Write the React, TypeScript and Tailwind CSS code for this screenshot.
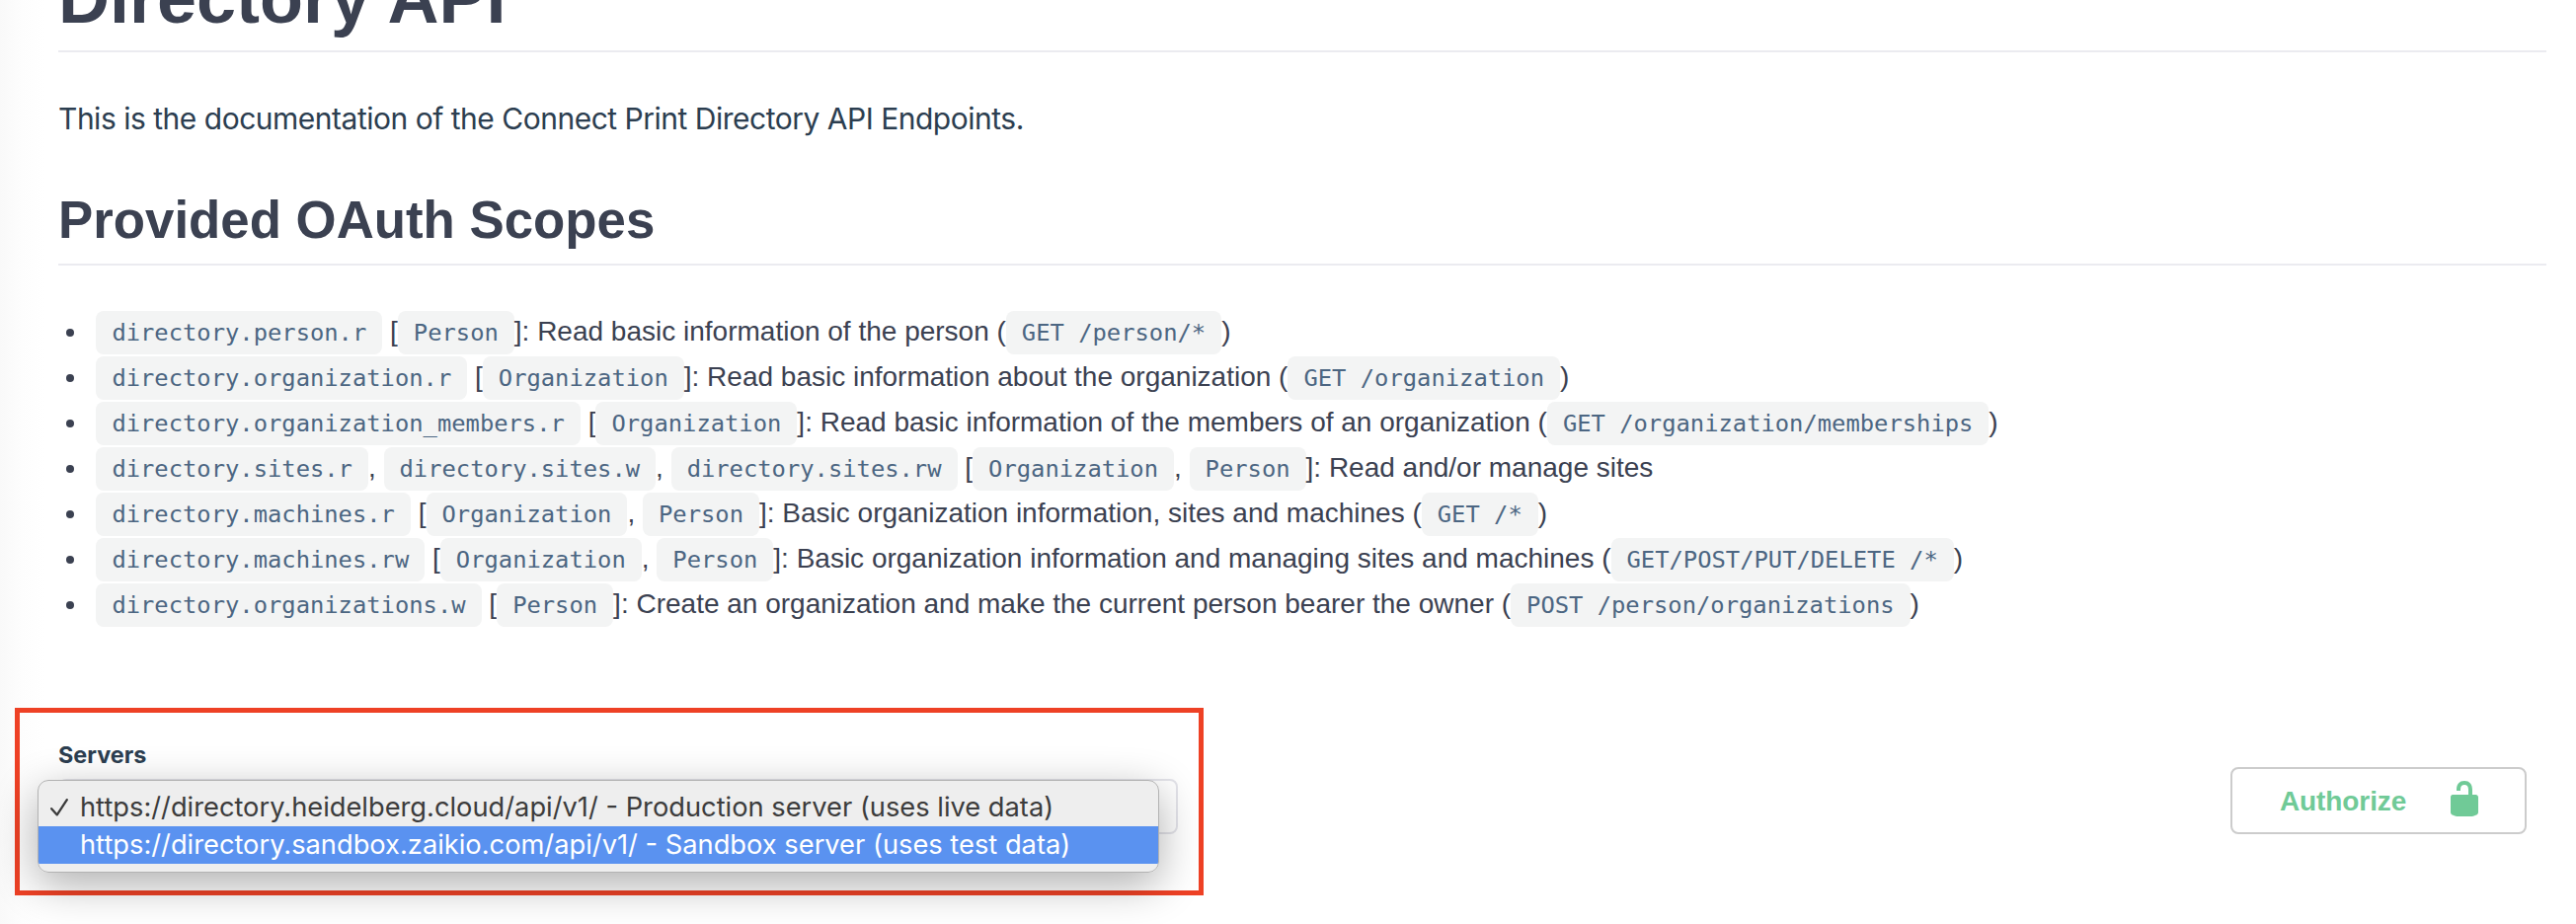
import type { ReactNode } from "react";

function Code({ children }: { children: ReactNode }) {
  return (
    <code className="rounded-[8px] bg-[#f3f4f4] px-4 py-2 font-['DejaVu_Sans_Mono',monospace] text-[23.8px] leading-none text-[#4c6682]">
      {children}
    </code>
  );
}

type Scope = { names: string[]; owners: string[]; text: string; endpoint?: string };

const scopes: Scope[] = [
  { names: ["directory.person.r"], owners: ["Person"], text: "Read basic information of the person", endpoint: "GET /person/*" },
  { names: ["directory.organization.r"], owners: ["Organization"], text: "Read basic information about the organization", endpoint: "GET /organization" },
  { names: ["directory.organization_members.r"], owners: ["Organization"], text: "Read basic information of the members of an organization", endpoint: "GET /organization/memberships" },
  { names: ["directory.sites.r", "directory.sites.w", "directory.sites.rw"], owners: ["Organization", "Person"], text: "Read and/or manage sites" },
  { names: ["directory.machines.r"], owners: ["Organization", "Person"], text: "Basic organization information, sites and machines", endpoint: "GET /*" },
  { names: ["directory.machines.rw"], owners: ["Organization", "Person"], text: "Basic organization information and managing sites and machines", endpoint: "GET/POST/PUT/DELETE /*" },
  { names: ["directory.organizations.w"], owners: ["Person"], text: "Create an organization and make the current person bearer the owner", endpoint: "POST /person/organizations" },
];

function CodeList({ items }: { items: string[] }) {
  return (
    <>
      {items.map((item, i) => (
        <span key={item}>
          {i > 0 && ", "}
          <Code>{item}</Code>
        </span>
      ))}
    </>
  );
}

function ScopeRow({ scope }: { scope: Scope }) {
  return (
    <li className="flex h-[46px] items-center">
      <span className="mt-[2px] mr-[22.4px] ml-[8px] size-[8px] rounded-full bg-[#3b4151]" />
      <span className="h-[46px] whitespace-pre">
        <CodeList items={scope.names} />
        {" ["}
        <CodeList items={scope.owners} />
        {"]: " + scope.text}
        {scope.endpoint && (
          <>
            {" ("}
            <Code>{scope.endpoint}</Code>
            {")"}
          </>
        )}
      </span>
    </li>
  );
}

function ServerMenu() {
  return (
    <div className="absolute top-[-1px] left-[-23px] flex h-[94px] w-[1136px] flex-col overflow-hidden rounded-[11px] border border-[#b2b2b2] bg-[#eeeeee] pt-2 text-[27.27px] leading-[38px] whitespace-pre text-[#3c3c3c]">
      <div className="flex h-[38px] items-start pl-[12px]">
        <svg viewBox="0 0 18 18" className="mt-[10px] mr-[12px] size-[18px]" fill="none" stroke="#3c3c3c" strokeWidth="2.3" strokeLinecap="round" strokeLinejoin="round">
          <path d="M1.2 10.2 6.8 16.4 16.8 1.2" />
        </svg>
        <span>https://directory.heidelberg.cloud/api/v1/ - Production server (uses live data)</span>
      </div>
      <div className="h-[38px] bg-[#5a92f0] pl-[42px] text-white">
        https://directory.sandbox.zaikio.com/api/v1/ - Sandbox server (uses test data)
      </div>
    </div>
  );
}

export default function App() {
  return (
    <div className="flex h-[936px] w-[2609px] flex-col overflow-hidden bg-white bg-[linear-gradient(to_right,#f9f9f9_0px,#fdfdfd_22px,#ffffff_46px)] font-['Liberation_Sans',Arial,sans-serif] text-[#3b4151]">
      <main className="mr-[30px] ml-[59px] flex flex-col">
        <h1 className="-mt-[38px] border-b-2 border-[#ebebf0] pb-[17px] text-[72px] leading-[72px] font-bold">Directory API</h1>
        <p className="mt-[47px] font-[Inter,sans-serif] text-[30px] leading-[40px] tracking-[-0.49px] text-[#2c3e50]">
          This is the documentation of the Connect Print Directory API Endpoints.
        </p>
        <h2 className="mt-[51px] border-b-2 border-[#ebebf0] pb-[12px] text-[52.8px] leading-[64px] font-bold">Provided OAuth Scopes</h2>
        <ul className="mt-[44px] flex flex-col text-[28px] leading-[46px]">
          {scopes.map((scope) => (
            <ScopeRow key={scope.names[0]} scope={scope} />
          ))}
        </ul>
      </main>
      <section className="mt-[82px] mr-[50px] ml-[15px] flex items-start justify-between">
        <div className="h-[190px] w-[1204px] border-[5px] border-[#ee4125] pt-[29px] pl-[39px] font-[Inter,sans-serif]">
          <div className="text-[23.4px] leading-[28px] font-bold text-[#2c3e50]">Servers</div>
          <div className="relative mt-[10px] h-[56px] w-[1134px] rounded-[8px] border-2 border-[#e4e4ea]">
            <div className="absolute top-[-1px] left-[-23px] h-[94px] w-[1136px] rounded-[11px] shadow-[0_12px_44px_rgba(0,0,0,0.32)]" />
            <ServerMenu />
          </div>
        </div>
        <button className="mt-[60px] flex h-[68px] w-[300px] items-center rounded-[8px] border-2 border-[#cccccc] pl-[48px] text-[28px] font-bold text-[#70ca97]">
          <span className="mt-[2px] tracking-[-0.1px]">Authorize</span>
          <svg viewBox="0 0 20 20" className="mb-[4px] ml-[39px] size-[40px]" fill="#70ca97">
            <path d="M15.8 8H14V5.6C14 2.703 12.665 1 10 1 7.334 1 6 2.703 6 5.6V6h2v-.801C8 3.754 8.797 3 10 3c1.203 0 2 .754 2 2.199V8H4c-.553 0-1 .646-1 1.199V17c0 .549.428 1.139.951 1.307l1.197.387C5.672 18.861 6.55 19 7.1 19h5.8c.549 0 1.428-.139 1.951-.307l1.196-.387c.524-.167.953-.757.953-1.306V9.199C17 8.646 16.352 8 15.8 8z" />
          </svg>
        </button>
      </section>
    </div>
  );
}
